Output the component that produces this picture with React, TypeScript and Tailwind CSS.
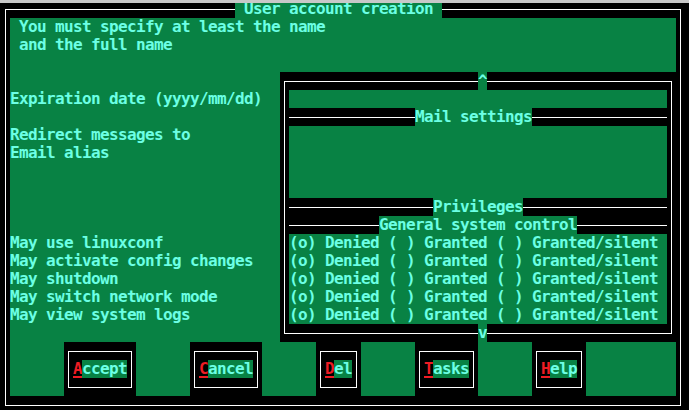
import React from "react";

const G = "bg-[#088244]";

function Sep({ lead, label }: { lead: string; label: string }) {
  return (
    <div className="flex h-[18px] bg-black">
      <div className={`mt-[9px] h-px bg-white ${lead}`} />
      <div className={`h-[18px] whitespace-pre ${G}`}>{label}</div>
      <div className="mt-[9px] h-px flex-1 bg-white" />
    </div>
  );
}

function Btn({ k, rest }: { k: string; rest: string }) {
  return (
    <div className="h-[54px] bg-black px-[4px] pt-[9px] pb-[8px]">
      <div className="flex border border-white px-[4px] pt-[8px] pb-[9px]">
        <span className="text-[#ee1c24] underline decoration-2 underline-offset-[2px]">{k}</span>
        <span className={G}>{rest}</span>
      </div>
    </div>
  );
}

const leftRows = [
  "",
  "Expiration date (yyyy/mm/dd)",
  "",
  "Redirect messages to",
  "Email alias",
  "",
  "",
  "",
  "",
  "May use linuxconf",
  "May activate config changes",
  "May shutdown",
  "May switch network mode",
  "May view system logs",
  "",
];

const radio = "(o) Denied ( ) Granted ( ) Granted/silent";

export default function App() {
  return (
    <div className="relative h-[410px] w-[689px] overflow-hidden bg-black font-['DejaVu_Sans_Mono','Liberation_Mono',monospace] text-[16px] font-bold leading-[18px] tracking-[-0.633px] text-[#6cffe4]">
      <div className="ml-[5px] mt-[9px] w-[676px] border border-white px-[4px] pt-[8px] pb-[9px]">
        <div className="flex w-[666px] flex-col">
          {/* message */}
          <div className={`h-[54px] whitespace-pre ${G}`}>
            <div className="h-[18px]"> You must specify at least the name</div>
            <div className="h-[18px]"> and the full name</div>
          </div>

          {/* middle */}
          <div className="flex">
            <div className={`w-[270px] ${G}`}>
              {leftRows.map((t, i) => (
                <div key={i} className="h-[18px] whitespace-pre">
                  {t}
                </div>
              ))}
            </div>
            <div className="relative w-[396px] bg-black px-[4px] pt-[9px] pb-[8px]">
              <div className="border border-white px-[4px] pt-[8px] pb-[9px]">
                <div className={`h-[18px] ${G}`} />
                <Sep lead="w-[126px]" label="Mail settings" />
                <div className={`h-[72px] ${G}`} />
                <Sep lead="w-[144px]" label="Privileges" />
                <Sep lead="w-[90px]" label="General system control" />
                {[0, 1, 2, 3, 4].map((i) => (
                  <div key={i} className={`h-[18px] whitespace-pre ${G}`}>
                    {radio}
                  </div>
                ))}
              </div>
              <div className={`absolute left-[198px] top-0 h-[18px] w-[9px] ${G}`}>^</div>
              <div className={`absolute left-[198px] top-[252px] h-[18px] w-[9px] ${G}`}>v</div>
            </div>
          </div>

          {/* buttons */}
          <div className="flex h-[54px]">
            <div className={`w-[54px] ${G}`} />
            <Btn k="A" rest="ccept" />
            <div className={`w-[54px] ${G}`} />
            <Btn k="C" rest="ancel" />
            <div className={`w-[54px] ${G}`} />
            <Btn k="D" rest="el" />
            <div className={`w-[54px] ${G}`} />
            <Btn k="T" rest="asks" />
            <div className={`w-[54px] ${G}`} />
            <Btn k="H" rest="elp" />
            <div className={`flex-1 ${G}`} />
          </div>
        </div>
      </div>

      <div className={`absolute left-[235px] top-0 h-[18px] whitespace-pre ${G}`}> User account creation </div>
      <div className="absolute left-0 right-0 top-0 h-[3px] bg-[#c8c8c8]" />
    </div>
  );
}
